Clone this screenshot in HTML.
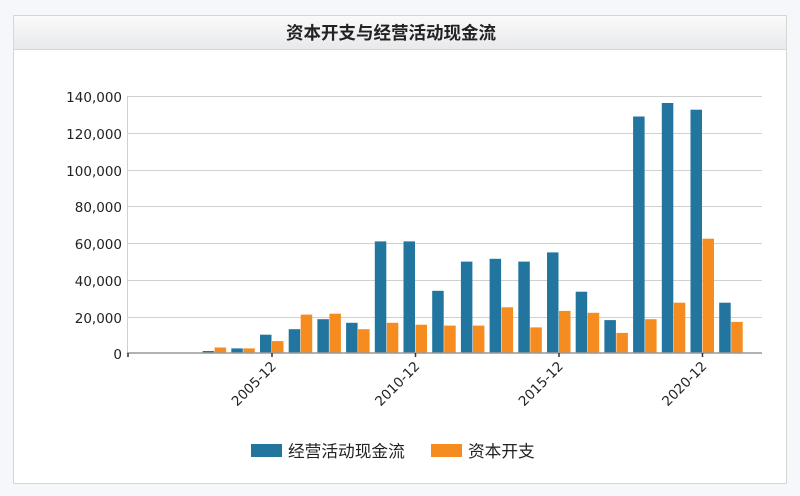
<!DOCTYPE html>
<html><head><meta charset="utf-8"><style>
body{margin:0;background:#f5f7fa;width:800px;height:496px;overflow:hidden;font-family:"Liberation Sans","Noto Sans CJK SC",sans-serif}
</style></head><body>
<svg width="800" height="496" xmlns="http://www.w3.org/2000/svg" style="position:absolute;left:0;top:0">
<defs><linearGradient id="g" x1="0" y1="0" x2="0" y2="1"><stop offset="0" stop-color="#fafafa"/><stop offset="1" stop-color="#e8e9eb"/></linearGradient></defs>
<rect x="13.5" y="15.5" width="773" height="468" fill="#fff" stroke="#d6d6d6"/>
<rect x="14" y="16" width="772" height="33" fill="url(#g)"/>
<line x1="14" y1="49.5" x2="786" y2="49.5" stroke="#d6d6d6"/>
<text x="391" y="39" text-anchor="middle" font-size="17.5" font-weight="bold" fill="#222" font-family="Liberation Sans,Noto Sans CJK SC,sans-serif">资本开支与经营活动现金流</text>
<g stroke="#d0d0d0" stroke-width="1">
<line x1="127" y1="96.5" x2="762" y2="96.5"/><line x1="127" y1="133.5" x2="762" y2="133.5"/><line x1="127" y1="170.5" x2="762" y2="170.5"/><line x1="127" y1="206.5" x2="762" y2="206.5"/><line x1="127" y1="243.5" x2="762" y2="243.5"/><line x1="127" y1="280.5" x2="762" y2="280.5"/><line x1="127" y1="317.5" x2="762" y2="317.5"/>
<line x1="127.5" y1="96" x2="127.5" y2="353"/>
</g>
<g font-size="13.5" fill="#222" text-anchor="end" font-family="DejaVu Sans,sans-serif">
<text x="122" y="102">140,000</text><text x="122" y="139">120,000</text><text x="122" y="176">100,000</text><text x="122" y="212">80,000</text><text x="122" y="249">60,000</text><text x="122" y="286">40,000</text><text x="122" y="323">20,000</text><text x="122" y="359">0</text>
</g>
<g fill="#21759f">
<rect x="202.6" y="351" width="11.5" height="2"/>
<rect x="231.3" y="348.4" width="11.5" height="4.6"/>
<rect x="260" y="334.7" width="11.5" height="18.3"/>
<rect x="288.7" y="329.2" width="11.5" height="23.8"/>
<rect x="317.4" y="319.2" width="11.5" height="33.8"/>
<rect x="346.1" y="322.8" width="11.5" height="30.2"/>
<rect x="374.8" y="241.4" width="11.5" height="111.6"/>
<rect x="403.5" y="241.4" width="11.5" height="111.6"/>
<rect x="432.2" y="290.8" width="11.5" height="62.2"/>
<rect x="460.9" y="261.6" width="11.5" height="91.4"/>
<rect x="489.6" y="258.8" width="11.5" height="94.2"/>
<rect x="518.3" y="261.6" width="11.5" height="91.4"/>
<rect x="547" y="252.4" width="11.5" height="100.6"/>
<rect x="575.7" y="291.7" width="11.5" height="61.3"/>
<rect x="604.4" y="320.1" width="11.5" height="32.9"/>
<rect x="633.1" y="116.5" width="11.5" height="236.5"/>
<rect x="661.8" y="103" width="11.5" height="250"/>
<rect x="690.5" y="109.7" width="11.5" height="243.3"/>
<rect x="719.2" y="302.7" width="11.5" height="50.3"/>
</g>
<g fill="#f68b1f">
<rect x="214.6" y="347.5" width="11.5" height="5.5"/>
<rect x="243.3" y="348.4" width="11.5" height="4.6"/>
<rect x="272" y="341.1" width="11.5" height="11.9"/>
<rect x="300.7" y="314.6" width="11.5" height="38.4"/>
<rect x="329.4" y="313.7" width="11.5" height="39.3"/>
<rect x="358.1" y="329.2" width="11.5" height="23.8"/>
<rect x="386.8" y="322.8" width="11.5" height="30.2"/>
<rect x="415.5" y="324.7" width="11.5" height="28.3"/>
<rect x="444.2" y="325.6" width="11.5" height="27.4"/>
<rect x="472.9" y="325.6" width="11.5" height="27.4"/>
<rect x="501.6" y="307.3" width="11.5" height="45.7"/>
<rect x="530.3" y="327.4" width="11.5" height="25.6"/>
<rect x="559" y="310.9" width="11.5" height="42.1"/>
<rect x="587.7" y="312.8" width="11.5" height="40.2"/>
<rect x="616.4" y="332.9" width="11.5" height="20.1"/>
<rect x="645.1" y="319.2" width="11.5" height="33.8"/>
<rect x="673.8" y="302.7" width="11.5" height="50.3"/>
<rect x="702.5" y="238.7" width="11.5" height="114.3"/>
<rect x="731.2" y="321.9" width="11.5" height="31.1"/>
</g>
<line x1="127" y1="353" x2="762" y2="353" stroke="#999" stroke-width="1.5"/>
<g stroke="#333" stroke-width="1.5">
<line x1="128" y1="353" x2="128" y2="357"/><line x1="272" y1="353" x2="272" y2="357"/><line x1="415.5" y1="353" x2="415.5" y2="357"/><line x1="559" y1="353" x2="559" y2="357"/><line x1="702.5" y1="353" x2="702.5" y2="357"/>
</g>
<g font-size="13.5" fill="#222" text-anchor="end" font-family="DejaVu Sans,sans-serif">
<text transform="translate(277,367) rotate(-45)">2005-12</text>
<text transform="translate(420.5,367) rotate(-45)">2010-12</text>
<text transform="translate(564,367) rotate(-45)">2015-12</text>
<text transform="translate(707.5,367) rotate(-45)">2020-12</text>
</g>
<rect x="251" y="444" width="31" height="13" fill="#21759f"/>
<text x="288" y="457" font-size="16.7" fill="#222">经营活动现金流</text>
<rect x="431" y="444" width="31" height="13" fill="#f68b1f"/>
<text x="468" y="457" font-size="16.7" fill="#222">资本开支</text>
</svg>
</body></html>
